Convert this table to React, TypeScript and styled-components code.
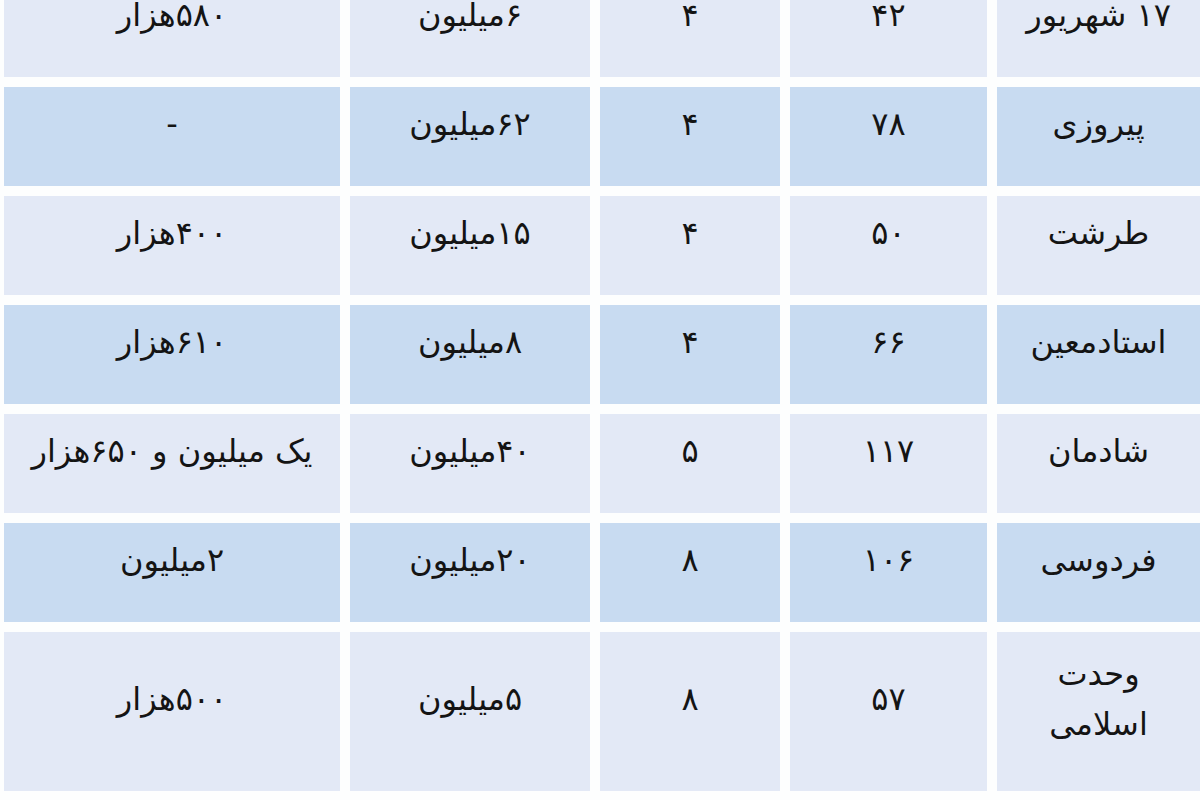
import styled, { createGlobalStyle } from 'styled-components';

const GlobalStyle = createGlobalStyle`
  html, body {
    margin: 0;
    padding: 0;
    background: #ffffff;
  }
`;

const Viewport = styled.div`
  width: 1200px;
  height: 800px;
  overflow: hidden;
  background: #fdfefe;
`;

// the table is cropped at the top: the first row starts above the window
const Table = styled.div`
  display: flex;
  flex-direction: column;
  gap: 10px;
  margin-top: -22px;
  padding-left: 4px;
  direction: rtl;
  font-family: 'DejaVu Sans', sans-serif;
  color: #141414;
`;

const Row = styled.div<{ $tall?: boolean }>`
  display: grid;
  grid-template-columns: 203px 197px 180px 240px 336px;
  column-gap: 10px;
  height: ${({ $tall }) => ($tall ? '159px' : '99px')};
`;

const Cell = styled.div<{ $dark?: boolean }>`
  display: flex;
  align-items: center;
  justify-content: center;
  padding-bottom: 24px;
  box-sizing: border-box;
  background: ${({ $dark }) => ($dark ? '#c8dbf1' : '#e3e9f6')};
  font-size: 32px;
  line-height: 1.55;
  text-align: center;
  white-space: nowrap;
`;

const Name = styled.span<{ $wrap?: boolean }>`
  white-space: ${({ $wrap }) => ($wrap ? 'normal' : 'nowrap')};
  max-width: ${({ $wrap }) => ($wrap ? '150px' : 'none')};
`;

type Entry = {
  name: string;
  age: string;
  floors: string;
  price: string;
  rent: string;
};

const rows: Entry[] = [
  { name: '۱۷ شهریور', age: '۴۲', floors: '۴', price: '۶میلیون', rent: '۵۸۰هزار' },
  { name: 'پیروزی', age: '۷۸', floors: '۴', price: '۶۲میلیون', rent: '-' },
  { name: 'طرشت', age: '۵۰', floors: '۴', price: '۱۵میلیون', rent: '۴۰۰هزار' },
  { name: 'استادمعین', age: '۶۶', floors: '۴', price: '۸میلیون', rent: '۶۱۰هزار' },
  { name: 'شادمان', age: '۱۱۷', floors: '۵', price: '۴۰میلیون', rent: 'یک میلیون و ۶۵۰هزار' },
  { name: 'فردوسی', age: '۱۰۶', floors: '۸', price: '۲۰میلیون', rent: '۲میلیون' },
  { name: 'وحدت اسلامی', age: '۵۷', floors: '۸', price: '۵میلیون', rent: '۵۰۰هزار' },
];

const App = () => (
  <>
    <GlobalStyle />
    <Viewport>
      <Table>
        {rows.map((r, i) => {
          const dark = i % 2 === 1;
          const tall = i === rows.length - 1;
          return (
            <Row key={r.name} $tall={tall}>
              <Cell $dark={dark}>
                <Name $wrap={tall}>{r.name}</Name>
              </Cell>
              <Cell $dark={dark}>{r.age}</Cell>
              <Cell $dark={dark}>{r.floors}</Cell>
              <Cell $dark={dark}>{r.price}</Cell>
              <Cell $dark={dark}>{r.rent}</Cell>
            </Row>
          );
        })}
      </Table>
    </Viewport>
  </>
);

export default App;
